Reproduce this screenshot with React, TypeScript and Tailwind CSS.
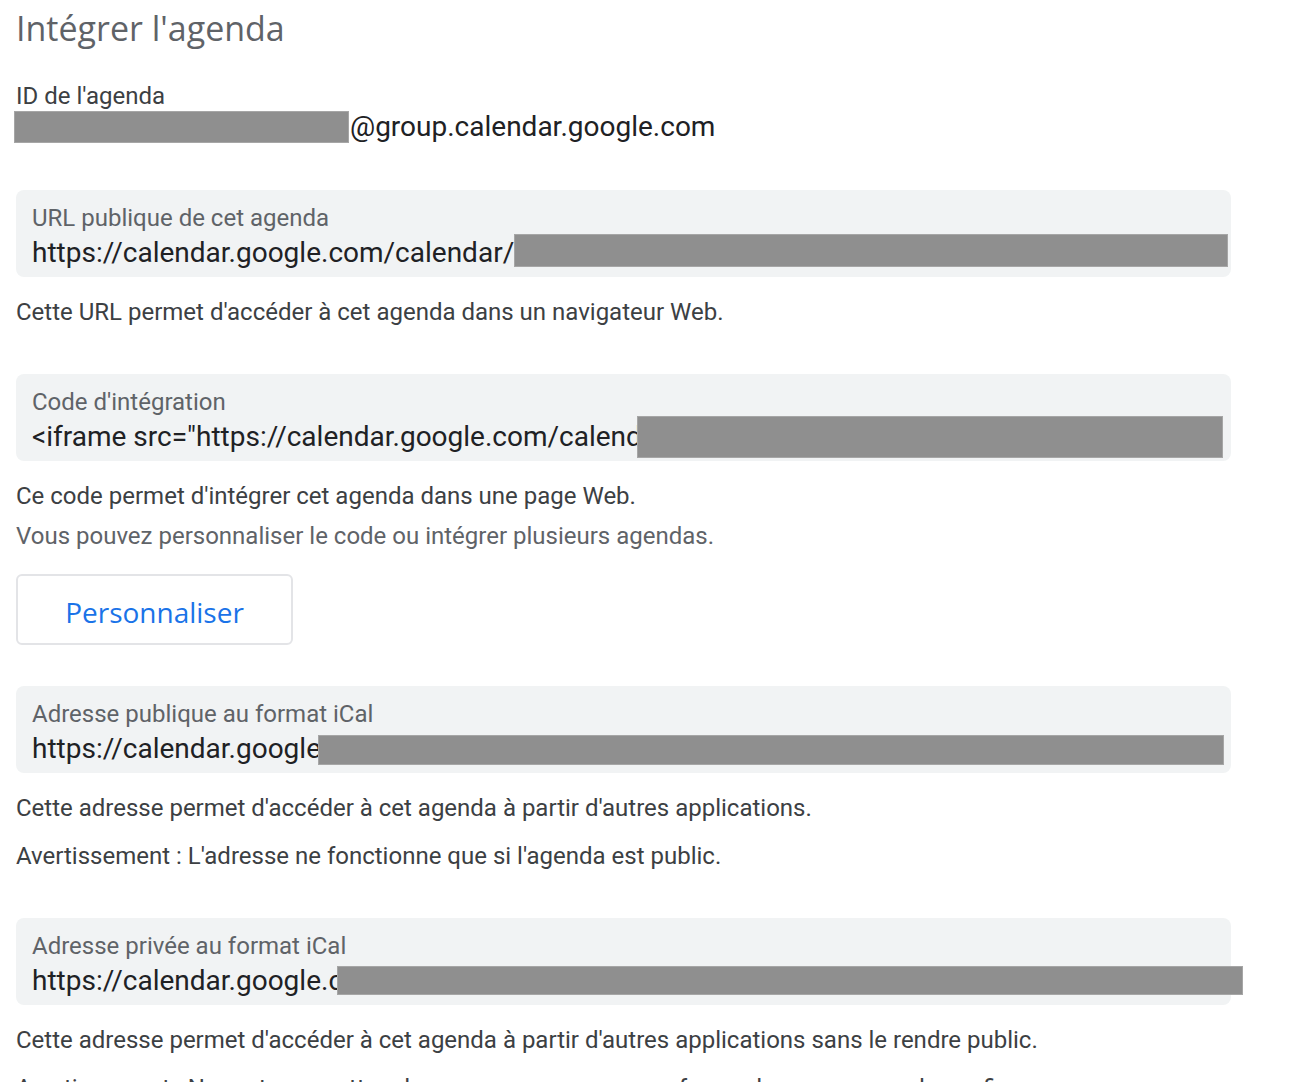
import React from 'react';

const font = { fontFamily: 'Roboto, "Noto Sans", sans-serif' };
const sansTitle = { fontFamily: '"Open Sans", Roboto, sans-serif' };

function InfoBox({ label, value, redact }: { label: string; value: string; redact: string }) {
  return (
    <div className="w-[1215px] h-[87px] rounded-lg bg-[#f1f3f4] px-4 pt-[14px]">
      <div className="text-[24px] leading-[28px] text-[#5f6368]">{label}</div>
      <div className="relative mt-[4px] h-[34px]">
        <div className="whitespace-nowrap text-[28px] leading-[34px] text-[#202124]">{value}</div>
        <div className={`absolute bg-[#8f8f8f] border border-[#a6a6a6] ${redact}`} />
      </div>
    </div>
  );
}

export default function App() {
  return (
    <div className="min-h-screen bg-white pl-4 overflow-hidden" style={font}>
      <h1 className="pt-[8px] text-[34px] leading-[40px] text-[#5f6368]" style={sansTitle}>
        Intégrer l'agenda
      </h1>

      <div className="mt-[34px] text-[24px] leading-[28px] text-[#3c4043]">ID de l'agenda</div>
      <div className="flex items-center h-[34px] mt-0">
        <div className="-ml-[2px] w-[335px] h-[32px] bg-[#8f8f8f] border border-[#a6a6a6]" />
        <span className="ml-[1px] text-[28px] leading-[34px] text-[#202124]">@group.calendar.google.com</span>
      </div>

      <div className="mt-[46px]">
        <InfoBox
          label="URL publique de cet agenda"
          value="https://calendar.google.com/calendar/embed?src=c_9a8f2b1d7e6c5a4b3f2e1d0c9b8a7"
          redact="left-[482px] top-[-2px] w-[714px] h-[33px]"
        />
      </div>
      <p className="mt-[21px] text-[24px] leading-[28px] text-[#3c4043]">
        Cette URL permet d'accéder à cet agenda dans un navigateur Web.
      </p>

      <div className="mt-[48px]">
        <InfoBox
          label="Code d'intégration"
          value={'<iframe src="https://calendar.google.com/calendar/embed?src=c_9a8f2b1d7'}
          redact="left-[605px] top-[-4px] w-[586px] h-[42px]"
        />
      </div>
      <p className="mt-[21px] text-[24px] leading-[28px] text-[#3c4043]">
        Ce code permet d'intégrer cet agenda dans une page Web.
      </p>
      <p className="mt-[12px] text-[24px] leading-[28px] text-[#5f6368]">
        Vous pouvez personnaliser le code ou intégrer plusieurs agendas.
      </p>

      <button
        className="mt-[24px] w-[277px] h-[71px] rounded-md border-2 border-[#e3e4e7] bg-white pt-[4px] text-[28px] font-medium text-[#1a73e8]"
        style={sansTitle}
      >
        Personnaliser
      </button>

      <div className="mt-[41px]">
        <InfoBox
          label="Adresse publique au format iCal"
          value="https://calendar.google.com/calendar/ical/c_9a8f2b1d7e6c5a4b3f2e1d0c9b8a7f6e5d4"
          redact="left-[286px] top-[3px] w-[906px] h-[30px]"
        />
      </div>
      <p className="mt-[21px] text-[24px] leading-[28px] text-[#3c4043]">
        Cette adresse permet d'accéder à cet agenda à partir d'autres applications.
      </p>
      <p className="mt-[20px] text-[24px] leading-[28px] text-[#3c4043]">
        Avertissement : L'adresse ne fonctionne que si l'agenda est public.
      </p>

      <div className="mt-[48px]">
        <InfoBox
          label="Adresse privée au format iCal"
          value="https://calendar.google.com/calendar/ical/c_9a8f2b1d7e6c5a4b3f2e1d0c9b8a7f6e5d4"
          redact="left-[305px] top-[2px] w-[906px] h-[29px]"
        />
      </div>
      <p className="mt-[21px] text-[24px] leading-[28px] text-[#3c4043]">
        Cette adresse permet d'accéder à cet agenda à partir d'autres applications sans le rendre public.
      </p>
      <p className="mt-[20px] text-[24px] leading-[28px] text-[#3c4043]">
        Avertissement : Ne partagez cette adresse avec personne, sauf avec des personnes de confiance.
      </p>
    </div>
  );
}
